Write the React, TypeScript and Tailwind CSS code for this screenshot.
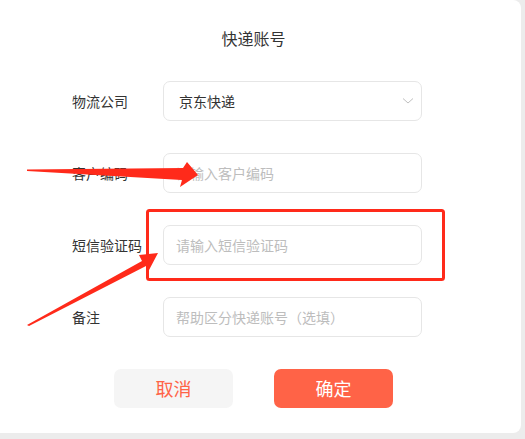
import { useState } from 'react';

const rows = [
    { key: 'company', label: '物流公司', value: '京东快递', select: true },
    { key: 'customer', label: '客户编码', placeholder: '请输入客户编码' },
    { key: 'sms', label: '短信验证码', placeholder: '请输入短信验证码' },
    { key: 'remark', label: '备注', placeholder: '帮助区分快递账号（选填）' },
];

export default function App() {
    const [values, setValues] = useState<Record<string, string>>({});

    return (
        <div
            className="w-[525px] h-[439px] bg-[#ececec] overflow-hidden relative"
            style={{ fontFamily: '"Noto Sans CJK SC", "Noto Sans", sans-serif' }}
        >
            <div className="w-[521px] h-[433px] bg-white rounded-r-[8px] flex flex-col items-center pt-[28px]">
                <div className="text-[16px] leading-[20px] text-[#333] pr-[14px]">快递账号</div>

                <div className="flex flex-col gap-[32px] mt-[33px] w-full">
                    {rows.map((row) => (
                        <div key={row.key} className="flex items-center h-[40px]">
                            <div className="w-[163px] pl-[72px] text-[14px] text-[#333] shrink-0">{row.label}</div>
                            {row.select ? (
                                <div className="w-[259px] h-[40px] border border-[#e6e6e6] rounded-[7px] flex items-center justify-between pl-[15px] pr-[7px]">
                                    <span className="text-[14px] text-[#333]">{row.value}</span>
                                    <svg width="12" height="8" viewBox="0 0 12 8" fill="none">
                                        <polyline points="1,1.5 6,6 11,1.5" stroke="#c0c0c0" strokeWidth="1" />
                                    </svg>
                                </div>
                            ) : (
                                <input
                                    value={values[row.key] ?? ''}
                                    onChange={(e) => setValues({ ...values, [row.key]: e.target.value })}
                                    placeholder={row.placeholder}
                                    className="w-[259px] h-[40px] border border-[#e6e6e6] rounded-[7px] px-[12px] text-[14px] text-[#333] placeholder:text-[#bdbdbd] outline-none"
                                />
                            )}
                        </div>
                    ))}
                </div>

                <div className="flex gap-[41px] mt-[32px] pr-[14px]">
                    <button className="w-[119px] h-[39px] rounded-[7px] bg-[#f5f5f5] text-[18px] text-[#ff6347]">取消</button>
                    <button className="w-[119px] h-[39px] rounded-[7px] bg-[#ff6347] text-[18px] text-white">确定</button>
                </div>
            </div>

            {/* annotation overlay */}
            <svg className="absolute inset-0 pointer-events-none" width="525" height="439" viewBox="0 0 525 439">
                <rect x="147.5" y="210.5" width="296" height="69" rx="2" fill="none" stroke="#ff2a1a" strokeWidth="3" />
                <polygon points="27,169.5 183,168 187,162 198,175 180,187 182,180 27,171" fill="#ff2a1a" />
                <polygon points="27,325 142,261 139,255 158,253 148,272 146,266 29,326" fill="#ff2a1a" />
            </svg>
        </div>
    );
}
